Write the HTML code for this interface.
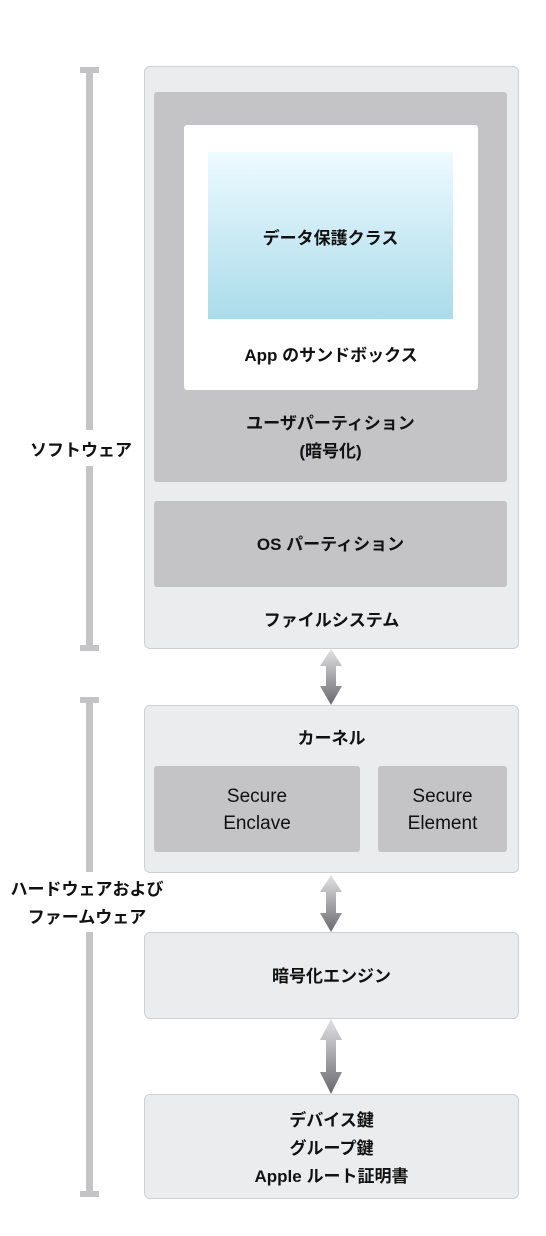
<!DOCTYPE html><html><head><meta charset="utf-8"><style>
body{margin:0;width:546px;height:1236px;background:#fff;position:relative;font-family:"Liberation Sans","Noto Sans CJK JP",sans-serif;color:#111;overflow:hidden}
div{position:absolute;box-sizing:border-box}
.o{background:#ebeced;border:1px solid #cfd0d1;border-radius:6px}
.g{background:#c4c4c6;border-radius:3px}
.t{font-size:17px;font-weight:bold;text-align:center;line-height:28px;width:100%}
.n{font-size:19px;text-align:center;line-height:27px;width:100%}
.bar{background:#c4c4c6}
</style></head><body>
<div class="bar" style="left:80px;top:67px;width:19px;height:6px"></div>
<div class="bar" style="left:86px;top:67px;width:7px;height:363px"></div>
<div class="bar" style="left:86px;top:466px;width:7px;height:184px"></div>
<div class="bar" style="left:80px;top:645px;width:19px;height:6px"></div>
<div style="left:30px;top:436px;width:130px;font-size:17px;font-weight:bold">ソフトウェア</div>
<div class="bar" style="left:80px;top:697px;width:19px;height:6px"></div>
<div class="bar" style="left:86px;top:697px;width:7px;height:175px"></div>
<div class="bar" style="left:86px;top:932px;width:7px;height:265px"></div>
<div class="bar" style="left:80px;top:1191px;width:19px;height:6px"></div>
<div style="left:0;top:876px;font-size:17px;font-weight:bold;line-height:28px;text-align:center;width:174px">ハードウェアおよび<br>ファームウェア</div>

<div class="o" style="left:144px;top:66px;width:375px;height:583px"></div>
<div class="g" style="left:154px;top:92px;width:353px;height:390px"></div>
<div style="left:184px;top:125px;width:294px;height:265px;background:#fff;border-radius:3px"></div>
<div style="left:208px;top:152px;width:245px;height:167px;background:linear-gradient(#eefaff,#aadbea)"></div>
<div class="t" style="left:208px;top:225px;width:245px">データ保護クラス</div>
<div class="t" style="left:184px;top:342px;width:294px">App のサンドボックス</div>
<div class="t" style="left:154px;top:410px;width:353px">ユーザパーティション<br>(暗号化)</div>
<div class="g" style="left:154px;top:501px;width:353px;height:86px"></div>
<div class="t" style="left:154px;top:531px;width:353px">OS パーティション</div>
<div class="t" style="left:144px;top:607px;width:375px">ファイルシステム</div>

<div class="o" style="left:144px;top:705px;width:375px;height:168px"></div>
<div class="t" style="left:144px;top:725px;width:375px">カーネル</div>
<div class="g" style="left:154px;top:766px;width:206px;height:86px"></div>
<div class="n" style="left:154px;top:783px;width:206px">Secure<br>Enclave</div>
<div class="g" style="left:378px;top:766px;width:129px;height:86px"></div>
<div class="n" style="left:378px;top:783px;width:129px">Secure<br>Element</div>

<div class="o" style="left:144px;top:932px;width:375px;height:87px"></div>
<div class="t" style="left:144px;top:963px;width:375px">暗号化エンジン</div>
<div class="o" style="left:144px;top:1094px;width:375px;height:105px"></div>
<div class="t" style="left:144px;top:1107px;width:375px">デバイス鍵<br>グループ鍵<br>Apple ルート証明書</div>

<svg style="position:absolute;left:0;top:0" width="546" height="1236">
<defs><linearGradient id="a" x1="0" y1="0" x2="0" y2="1"><stop offset="0" stop-color="#e2e2e4"/><stop offset="1" stop-color="#6a6a6e"/></linearGradient></defs>
<path d="M331 649L342 666H336V686H342L331 705L320 686H326V666H320Z" fill="url(#a)"/>
<path d="M331 875L342 892H336V913H342L331 932L320 913H326V892H320Z" fill="url(#a)"/>
<path d="M331 1019L342 1040H336V1072H342L331 1094L320 1072H326V1040H320Z" fill="url(#a)"/>
</svg>
</body></html>
